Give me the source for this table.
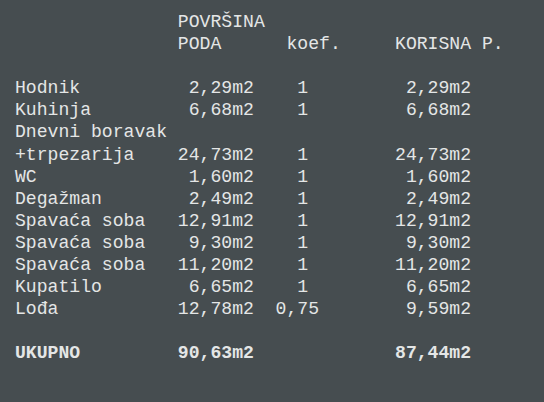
const rows: { name: string; area: string; k: string; kCol: number; useful: string }[] = [
  { name: "Hodnik", area: "2,29m2", k: "1", kCol: 26, useful: "2,29m2" },
  { name: "Kuhinja", area: "6,68m2", k: "1", kCol: 26, useful: "6,68m2" },
  { name: "Dnevni boravak", area: "", k: "", kCol: 26, useful: "" },
  { name: "+trpezarija", area: "24,73m2", k: "1", kCol: 26, useful: "24,73m2" },
  { name: "WC", area: "1,60m2", k: "1", kCol: 26, useful: "1,60m2" },
  { name: "Degažman", area: "2,49m2", k: "1", kCol: 26, useful: "2,49m2" },
  { name: "Spavaća soba", area: "12,91m2", k: "1", kCol: 26, useful: "12,91m2" },
  { name: "Spavaća soba", area: "9,30m2", k: "1", kCol: 26, useful: "9,30m2" },
  { name: "Spavaća soba", area: "11,20m2", k: "1", kCol: 26, useful: "11,20m2" },
  { name: "Kupatilo", area: "6,65m2", k: "1", kCol: 26, useful: "6,65m2" },
  { name: "Lođa", area: "12,78m2", k: "0,75", kCol: 24, useful: "9,59m2" },
];

// build a fixed-width line: name, area right-aligned to col 22, koef, useful right-aligned to col 42
const line = (name: string, area: string, k: string, kCol: number, useful: string) => {
  let s = name;
  if (!area && !k && !useful) return s;
  s = s.padEnd(22 - area.length) + area;
  if (k) s = s.padEnd(kCol) + k;
  s = s.padEnd(42 - useful.length) + useful;
  return s;
};

const App = () => {
  return (
    <div className="w-[544px] h-[402px] bg-[#464d50] overflow-hidden">
      <pre className="pl-[15px] pt-[11px] font-['Liberation_Mono',monospace] text-[18.1px] leading-[22.1px] text-[#e4e6e6]">
        <div>{"".padEnd(15) + "POVRŠINA"}</div>
        <div>{"".padEnd(15) + "PODA".padEnd(10) + "koef.".padEnd(10) + "KORISNA P."}</div>
        <div>&nbsp;</div>
        {rows.map((r, i) => (
          <div key={i}>{line(r.name, r.area, r.k, r.kCol, r.useful)}</div>
        ))}
        <div>&nbsp;</div>
        <div className="font-bold">{line("UKUPNO", "90,63m2", "", 0, "87,44m2")}</div>
      </pre>
    </div>
  );
};

export default App;
